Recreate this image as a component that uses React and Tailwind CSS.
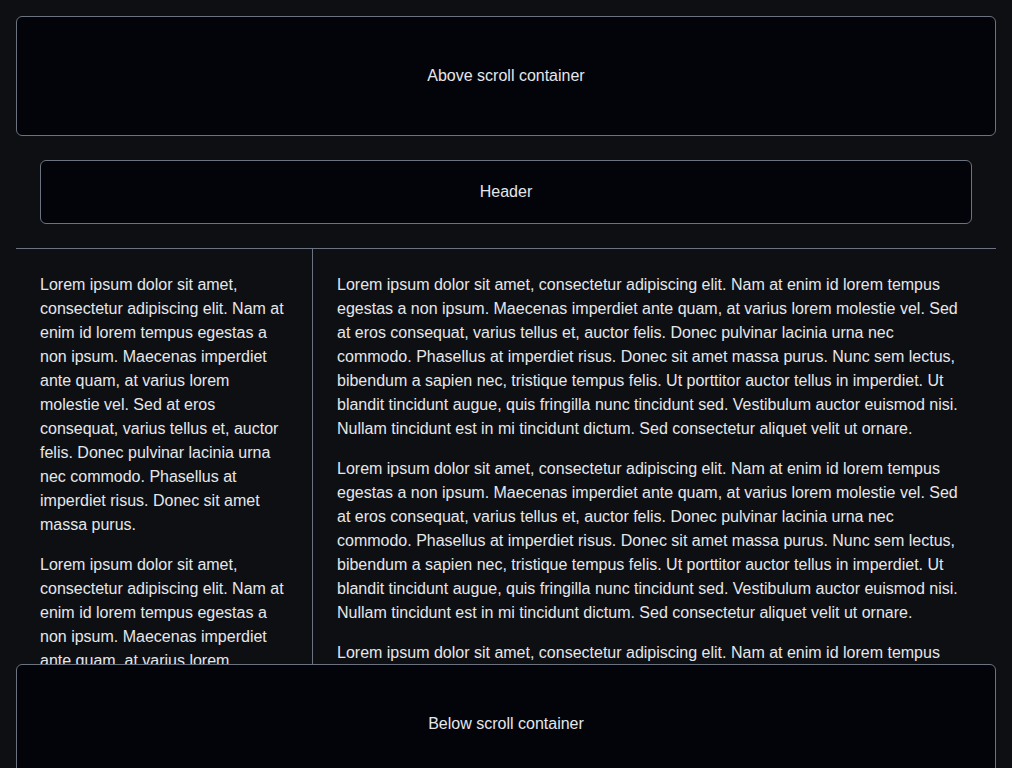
import React from "react";

const shortText =
  "Lorem ipsum dolor sit amet, consectetur adipiscing elit. Nam at enim id lorem tempus egestas a non ipsum. Maecenas imperdiet ante quam, at varius lorem molestie vel. Sed at eros consequat, varius tellus et, auctor felis. Donec pulvinar lacinia urna nec commodo. Phasellus at imperdiet risus. Donec sit amet massa purus.";

const longText =
  "Lorem ipsum dolor sit amet, consectetur adipiscing elit. Nam at enim id lorem tempus egestas a non ipsum. Maecenas imperdiet ante quam, at varius lorem molestie vel. Sed at eros consequat, varius tellus et, auctor felis. Donec pulvinar lacinia urna nec commodo. Phasellus at imperdiet risus. Donec sit amet massa purus. Nunc sem lectus, bibendum a sapien nec, tristique tempus felis. Ut porttitor auctor tellus in imperdiet. Ut blandit tincidunt augue, quis fringilla nunc tincidunt sed. Vestibulum auctor euismod nisi. Nullam tincidunt est in mi tincidunt dictum. Sed consectetur aliquet velit ut ornare.";

export default function App() {
  return (
    <div
      className="h-screen overflow-hidden bg-[#0e0f13] p-4 text-[16px] leading-6 text-[#e5e7eb]"
      style={{ fontFamily: '"Liberation Sans", Arial, sans-serif' }}
    >
      {/* Above */}
      <div className="flex h-[120px] items-center justify-center rounded-md border border-[#6b7280] bg-[#030409]">
        Above scroll container
      </div>

      {/* Header */}
      <div className="mx-6 mt-6 flex h-16 items-center justify-center rounded-md border border-[#6b7280] bg-[#030409]">
        Header
      </div>

      {/* Scroll container */}
      <div className="mt-6 flex h-[416px] overflow-hidden border-t border-[#6b7280]">
        <div className="w-[297px] shrink-0 space-y-4 border-r border-[#6b7280] p-6">
          <p>{shortText}</p>
          <p>{shortText}</p>
          <p>{shortText}</p>
        </div>
        <div className="flex-1 space-y-4 p-6">
          <p>{longText}</p>
          <p>{longText}</p>
          <p>{longText}</p>
        </div>
      </div>

      {/* Below */}
      <div className="flex h-[120px] items-center justify-center rounded-md border border-[#6b7280] bg-[#030409]">
        Below scroll container
      </div>
    </div>
  );
}
